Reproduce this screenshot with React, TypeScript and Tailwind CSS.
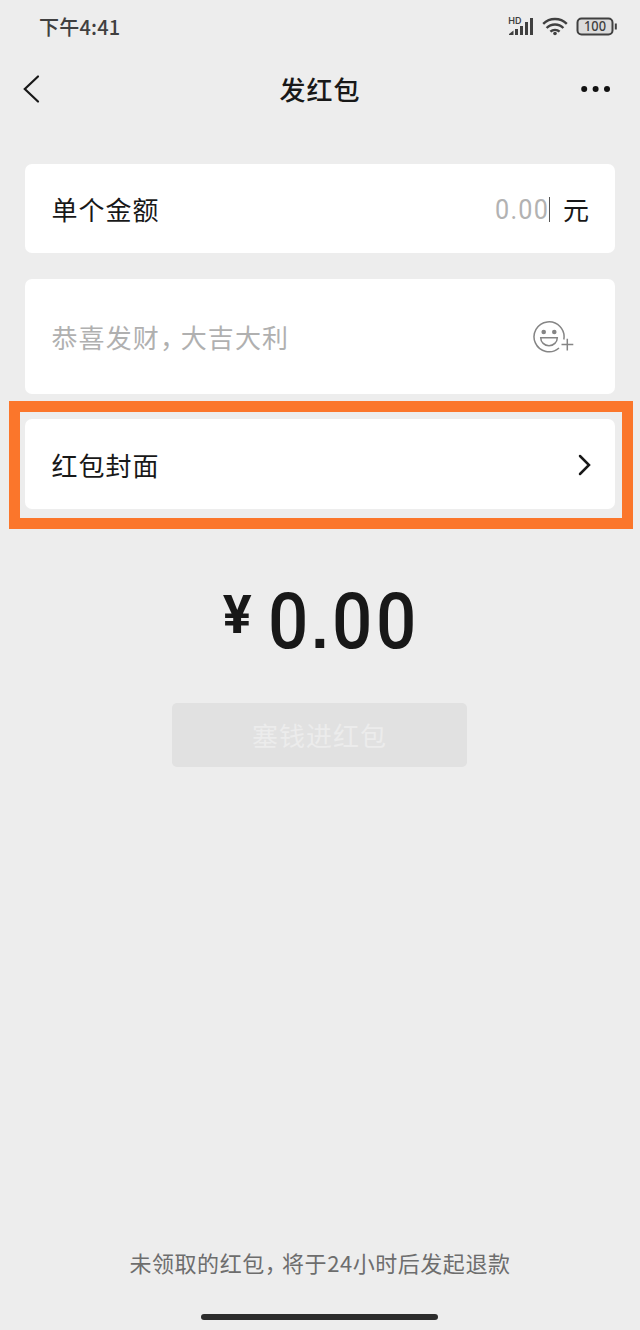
import type { ReactNode } from 'react'

export default function App() {
  return (
    <div className="flex h-[1330px] w-[640px] flex-col overflow-hidden bg-[#ededed] font-['Noto_Sans_CJK_SC',sans-serif] text-[#181818]">
      <StatusBar />
      <NavBar title="发红包" />

      <main className="flex flex-1 flex-col px-[25px] pt-[40px]">
        <Card className="h-[89px]">
          <Label>单个金额</Label>
          <div className="flex items-center pt-px">
            <span className="origin-right scale-x-[0.9] pt-[2px] font-['Roboto',sans-serif] text-[28px] leading-none tracking-[1.4px] text-[#b2b2b2]">
              0.00
            </span>
            <span className="h-[25px] w-px bg-[#555]" />
            <span className="ml-[13px] text-[26px] leading-none">元</span>
          </div>
        </Card>

        <Card className="mt-[26px] h-[115px]">
          <p className="pt-px pl-[0.5px] text-[26px] leading-none tracking-[1.1px] text-[#b0b0b0]">
            恭喜发财<Comma />大吉大利
          </p>
          <EmojiIcon />
        </Card>

        <div className="relative mt-[25px]">
          <Card className="h-[90px]">
            <Label>红包封面</Label>
            <ChevronRight />
          </Card>
          <div className="pointer-events-none absolute -top-[18px] -right-[18px] -bottom-[20px] -left-[16px] border-[11px] border-[#fb762b]" />
        </div>

        <div className="mt-[73px] flex h-[80px] items-start justify-center font-['Roboto',sans-serif]">
          <span className="mt-[6px] mr-[14px] text-[54px] font-bold leading-[54px]">¥</span>
          <span className="flex items-baseline text-[78px] font-medium leading-[80px]">
            <Digit>0</Digit>
            <span className="mr-px ml-[2px] w-[18px] font-['Liberation_Sans',sans-serif] text-[62px] font-bold leading-none">.</span>
            <Digit>0</Digit>
            <Digit>0</Digit>
          </span>
        </div>

        <button
          type="button"
          disabled
          className="mt-[41px] ml-[147px] flex h-[64px] w-[295px] items-center justify-center rounded-[5px] bg-[#e1e1e1] text-[26px] leading-none tracking-[1px] text-[#ececec]"
        >
          塞钱进红包
        </button>
      </main>

      <footer className="flex h-[85px] flex-col items-center">
        <p className="-mt-px text-[22px] leading-[36px] tracking-[0.55px] text-[#6d6d6d]">
          未领取的红包<Comma />将于24小时后发起退款
        </p>
        <div className="mt-[34px] mr-px h-[6px] w-[237px] rounded-full bg-[#2c2c2c]" />
      </footer>
    </div>
  )
}

function StatusBar() {
  return (
    <header className="flex h-[54px] items-center justify-between pl-[39px] pr-[22px] text-[#404040]">
      <span className="text-[20px] font-medium leading-none tracking-[0.2px]">下午4:41</span>
      <div className="flex items-center">
        <SignalIcon />
        <WifiIcon />
        <BatteryIcon />
      </div>
    </header>
  )
}

function NavBar({ title }: { title: string }) {
  return (
    <nav className="grid h-[70px] grid-cols-3 items-center pl-[22px] pr-[29px]">
      <svg viewBox="0 0 20 30" className="h-[30px] w-[20px]" fill="none" stroke="currentColor" strokeWidth="2.2" aria-label="返回">
        <path d="M16 2.5 2.8 15 16 27.5" strokeLinecap="round" />
      </svg>
      <h1 className="pl-[7px] text-center text-[26px] font-medium leading-none tracking-[1px]">{title}</h1>
      <svg viewBox="0 0 30 8" className="h-[8px] w-[30px] justify-self-end" fill="#111" aria-label="更多">
        <circle cx="3.2" cy="4" r="3" />
        <circle cx="14.6" cy="4" r="3" />
        <circle cx="26" cy="4" r="3" />
      </svg>
    </nav>
  )
}

function Card({ className, children }: { className: string; children: ReactNode }) {
  return (
    <section className={`flex shrink-0 items-center justify-between rounded-[7px] bg-white px-[26px] ${className}`}>
      {children}
    </section>
  )
}

function Label({ children }: { children: ReactNode }) {
  return <span className="pt-px pl-[0.5px] text-[26px] leading-none tracking-[1px]">{children}</span>
}

// half-width comma with a little room after it
function Comma() {
  return <span className="mr-[0.26em] [font-feature-settings:'halt']">，</span>
}

function Digit({ children }: { children: ReactNode }) {
  return <span className="inline-block w-[43.5px] scale-x-[0.91] text-center">{children}</span>
}

function EmojiIcon() {
  return (
    <svg viewBox="0 0 42 34" className="mr-[14px] h-[34px] w-[42px]" fill="none" stroke="#858585" strokeWidth="1.5" aria-hidden="true">
      <path d="M30.8 19.5A15 15 0 1 0 26 28" />
      <circle cx="10.7" cy="12" r="2.3" fill="#858585" stroke="none" />
      <circle cx="21.3" cy="12" r="2.3" fill="#858585" stroke="none" />
      <path d="M7.7 17.7h16.6a8.3 8 0 0 1-16.6 0z" />
      <path d="M28.500 24.500h11.800M34.300 18.700v11.800" />
    </svg>
  )
}

function ChevronRight() {
  return (
    <svg viewBox="0 0 14 24" className="-mr-[3px] mt-[2px] h-[24px] w-[14px]" fill="none" stroke="currentColor" strokeWidth="2.5" aria-hidden="true">
      <path d="M2 3 11 12 2 21" strokeLinecap="round" />
    </svg>
  )
}

function SignalIcon() {
  return (
    <svg viewBox="0 0 26 20" className="h-[20px] w-[26px] overflow-visible" fill="#404040" aria-hidden="true">
      <text x="0.2" y="6.8" fontSize="9" fontWeight="600" fontFamily="Inter, sans-serif">
        HD
      </text>
      <path d="M1 18v-1l4.5-3.5V18z" />
      <rect x="7" y="12" width="3" height="6" />
      <rect x="12" y="9" width="3" height="9" />
      <rect x="17" y="5" width="3" height="13" />
      <rect x="22" y="1" width="3" height="17" />
    </svg>
  )
}

function WifiIcon() {
  return (
    <svg viewBox="0 0 26 20" className="ml-[8px] h-[20px] w-[26px]" fill="none" stroke="#404040" strokeWidth="2.4" aria-hidden="true">
      <path d="M1.2 6.8a16.8 16.8 0 0 1 23.6 0M4.6 11a11.8 11.8 0 0 1 16.8 0M8.4 14.7a6.6 6.6 0 0 1 9.2 0" />
      <circle cx="13" cy="16.5" r="1.8" fill="#404040" stroke="none" />
    </svg>
  )
}

function BatteryIcon() {
  return (
    <svg viewBox="0 0 42 20" className="ml-[8px] h-[20px] w-[42px]" fill="none" stroke="#404040" aria-hidden="true">
      <rect x="1.5" y="1.5" width="35" height="16" rx="4" fill="#dcdcdc" strokeWidth="2" />
      <path d="M39.8 6.5v6" strokeWidth="2" />
      <text
        x="19"
        y="14.4"
        textAnchor="middle"
        fontSize="13.5"
        fontWeight="500"
        fontFamily="'Noto Sans', sans-serif"
        textLength="22"
        lengthAdjust="spacingAndGlyphs"
        fill="#404040"
        stroke="none"
      >
        100
      </text>
    </svg>
  )
}
